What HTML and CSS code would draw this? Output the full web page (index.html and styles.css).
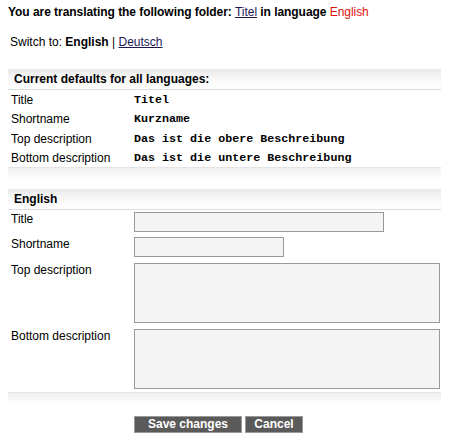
FILE: index.html
```html
<!DOCTYPE html>
<html>
<head>
<meta charset="utf-8">
<link rel="stylesheet" href="styles.css">
</head>
<body>
<p class="intro">You are translating the following folder: <a href="#" class="link">Titel</a> in language <span class="lang">English</span></p>
<p class="switch">Switch to: <b>English</b> | <a href="#" class="link">Deutsch</a></p>

<div class="section">
  <div class="head">Current defaults for all languages:</div>
  <div class="row"><span class="label">Title</span><span class="value">Titel</span></div>
  <div class="row"><span class="label">Shortname</span><span class="value">Kurzname</span></div>
  <div class="row"><span class="label">Top description</span><span class="value">Das ist die obere Beschreibung</span></div>
  <div class="row"><span class="label">Bottom description</span><span class="value">Das ist die untere Beschreibung</span></div>
  <div class="foot"></div>
</div>

<div class="section second">
  <div class="head">English</div>
  <div class="frow"><span class="label">Title</span><input type="text" class="inp wide"></div>
  <div class="frow"><span class="label">Shortname</span><input type="text" class="inp short"></div>
  <div class="frow tall"><span class="label">Top description</span><textarea class="area"></textarea></div>
  <div class="frow tall"><span class="label">Bottom description</span><textarea class="area"></textarea></div>
  <div class="foot"></div>
</div>

<div class="buttons">
  <button class="btn save">Save changes</button>
  <button class="btn cancel">Cancel</button>
</div>
</body>
</html>
```
FILE: styles.css
```css
body {
  margin: 4px 8px 8px;
  font-family: "Liberation Sans", Arial, sans-serif;
  font-size: 12px;
  color: #000;
  background: #fff;
}
.intro {
  margin: 0;
  font-weight: bold;
  line-height: 16px;
  font-size: 12px;
  letter-spacing: -0.05px;
}
.intro .link { font-weight: normal; }
.link { color: #1c1857; text-decoration: underline; }
.lang { color: #e01010; font-weight: normal; }
.switch {
  margin: 14px 0 0 2px;
  line-height: 16px;
}
.section {
  width: 433px;
  margin-top: 19px;
}
.second { margin-top: 9px; }
.head {
  height: 20px;
  line-height: 20px;
  padding-left: 6px;
  font-weight: bold;
  font-size: 12px;
  background: linear-gradient(#e8e8e8, #f6f6f6 40%, #ffffff);
  border-bottom: 1px solid #dcdcdc;
}
.row {
  display: flex;
  height: 19.25px;
  line-height: 20px;
}
.label {
  width: 123px;
  padding-left: 3px;
  flex: none;
}
.value {
  font-family: "Liberation Mono", "Courier New", monospace;
  font-weight: bold;
  font-size: 11.7px;
}
.foot {
  height: 12px;
  border-top: 1px solid #e4e4e4;
  background: linear-gradient(#f0f0f0, #ffffff);
}
.frow {
  display: flex;
  align-items: flex-start;
  padding: 2px 0 3px;
  line-height: 14px;
}
.frow.tall { padding-top: 3px; }
.frow .label { width: 123px; }
.inp, .area {
  box-sizing: border-box;
  margin: 0;
  border: 1px solid #999;
  background: #f4f4f4;
  font: 12px "Liberation Sans", Arial, sans-serif;
  padding: 1px 3px;
}
.inp { height: 20px; }
.wide { width: 250px; }
.short { width: 150px; }
.area {
  width: 306px;
  height: 60px;
  resize: none;
  display: block;
}
.buttons {
  display: flex;
  gap: 3px;
  padding-left: 126px;
  margin-top: 11px;
}
.btn {
  box-sizing: border-box;
  height: 17px;
  margin: 0;
  padding: 0;
  border: 1px solid #9a9a9a;
  background: #5a5a5a;
  color: #fff;
  font: bold 12px "Liberation Sans", Arial, sans-serif;
  line-height: 15px;
}
.save { width: 108px; }
.cancel { width: 58px; }
```
